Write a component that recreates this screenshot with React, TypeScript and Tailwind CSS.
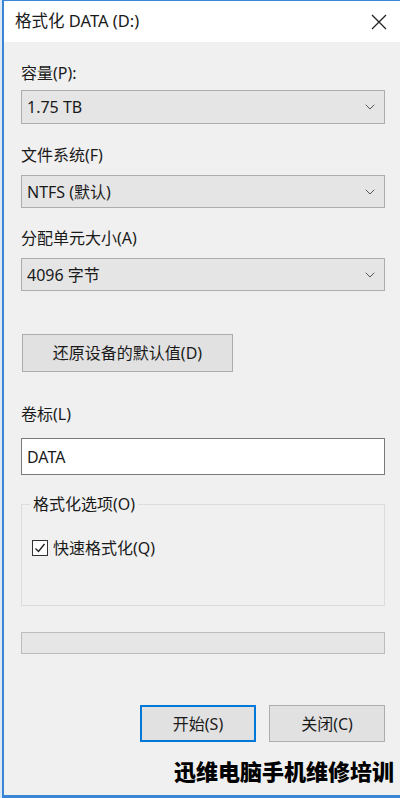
import { ChevronDown } from 'lucide-react';

const font = { fontFamily: '"Noto Sans", "Noto Sans CJK SC", sans-serif' };

function Label({ children, className = '' }: { children: React.ReactNode; className?: string }) {
  return <div className={`h-5 leading-5 text-[16px] text-[#1a1a1a] ${className}`}>{children}</div>;
}

function Select({ value, className = '' }: { value: string; className?: string }) {
  return (
    <div
      className={`h-[33px] flex items-center justify-between bg-[#e5e5e5] border border-[#adadad] pl-[5px] pr-[6px] ${className}`}
    >
      <span className="text-[16px] text-[#1a1a1a]">{value}</span>
      <ChevronDown className="w-4 h-4 text-[#555]" strokeWidth={1.5} />
    </div>
  );
}

export default function App() {
  return (
    <div className="w-[400px] h-[798px] bg-[#dbe9f7] pl-[2px]" style={font}>
      <div className="h-full flex flex-col border-l-2 border-t border-b-[3px] border-[#3a86d4] bg-[#f0f0f0]">
        {/* Title bar */}
        <div className="h-[41px] bg-white flex items-center justify-between pl-[11px] pr-[11px]">
          <span className="text-[16.5px] text-[#1a1a1a]">格式化 DATA (D:)</span>
          <svg width="16" height="16" viewBox="0 0 16 16" className="mr-[2px]">
            <path d="M1 1 L15 15 M15 1 L1 15" stroke="#222" strokeWidth="1.3" fill="none" />
          </svg>
        </div>

        {/* Body */}
        <div className="flex-1 flex flex-col pl-[17px] pr-[15px] pt-[21px]">
          <Label>容量(P):</Label>
          <Select value="1.75 TB" className="mt-[7px] !h-[34px]" />

          <Label className="mt-[21px]">文件系统(F)</Label>
          <Select value="NTFS (默认)" className="mt-[10px]" />

          <Label className="mt-[20px]">分配单元大小(A)</Label>
          <Select value="4096 字节" className="mt-[10px]" />

          <button className="mt-[43px] ml-px w-[211px] h-[38px] bg-[#e1e1e1] border border-[#adadad] text-[16px] text-[#1a1a1a]">
            还原设备的默认值(D)
          </button>

          <Label className="mt-[32px]">卷标(L)</Label>
          <div className="mt-[14px] h-[37px] bg-white border border-[#7a7a7a] flex items-center pl-[5px] text-[16px] text-[#1a1a1a]">
            DATA
          </div>

          {/* Group box */}
          <div className="relative mt-[29px] h-[102px] border border-[#dcdcdc]">
            <span className="absolute -top-[11px] left-[8px] px-[3px] bg-[#f0f0f0] text-[16px] leading-5 text-[#1a1a1a]">
              格式化选项(O)
            </span>
            <div className="flex items-center mt-[33px] ml-[10px] gap-[5px]">
              <div className="w-[16px] h-[16px] border border-[#333] bg-white flex items-center justify-center">
                <svg width="12" height="12" viewBox="0 0 12 12">
                  <path d="M1.5 6.5 L4.5 9.5 L10.5 2" stroke="#222" strokeWidth="1.4" fill="none" />
                </svg>
              </div>
              <span className="text-[16px] leading-5 text-[#1a1a1a]">快速格式化(Q)</span>
            </div>
          </div>

          {/* Progress bar */}
          <div className="mt-[26px] h-[22px] bg-[#e6e6e6] border border-[#bcbcbc]" />

          {/* Buttons */}
          <div className="mt-[51px] flex justify-end gap-[13px]">
            <button className="w-[116px] h-[37px] bg-[#e1e1e1] border-2 border-[#0078d7] text-[16px] text-[#1a1a1a]">
              开始(S)
            </button>
            <button className="w-[116px] h-[37px] bg-[#e1e1e1] border border-[#adadad] text-[16px] text-[#1a1a1a]">
              关闭(C)
            </button>
          </div>

          <div
            className="mt-[14px] -mr-[9px] text-right text-[22px] leading-[28px] font-black text-black"
            style={{ fontFamily: '"Noto Sans CJK SC", sans-serif' }}
          >
            迅维电脑手机维修培训
          </div>
        </div>
      </div>
    </div>
  );
}
